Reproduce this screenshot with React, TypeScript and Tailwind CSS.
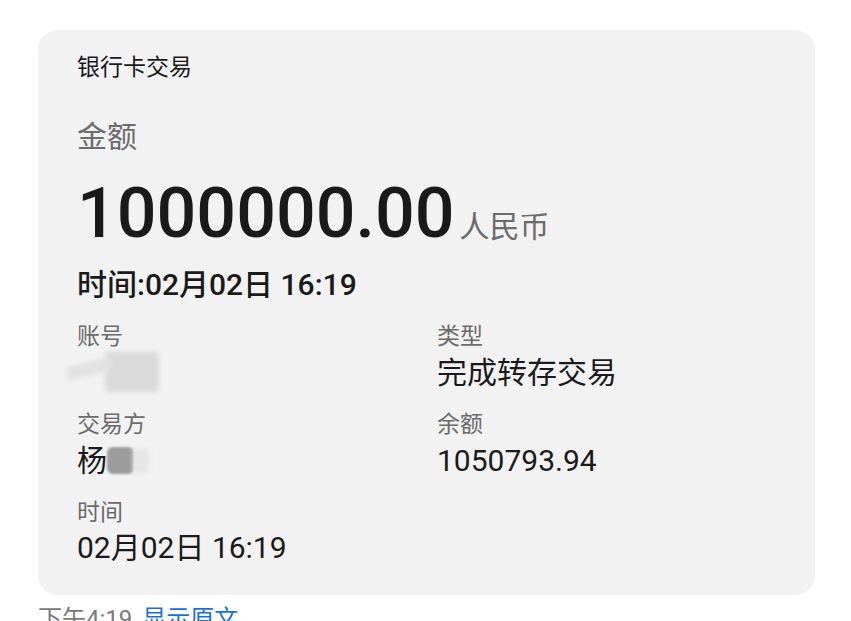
export default function App() {
  const font = { fontFamily: 'Roboto, "Noto Sans CJK SC", "Noto Sans", sans-serif' };
  return (
    <div className="w-[851px] h-[621px] bg-white overflow-hidden" style={font}>
      <div className="ml-[38px] mt-[30px] w-[777px] h-[565px] rounded-[20px] bg-[#f2f2f2] pl-[39px] pt-[23px]">
        <div className="text-[23px] leading-[30px] text-[#1a1a1a]">银行卡交易</div>
        <div className="mt-[36px] text-[30px] leading-[36px] text-[#6b6b6b]">金额</div>
        <div className="mt-[18px] flex items-baseline">
          <span className="text-[70px] leading-[80px] font-medium text-[#1a1a1a]">1000000.00</span>
          <span className="ml-[5px] text-[30px] text-[#6b6b6b]">人民币</span>
        </div>
        <div className="mt-[14px] text-[30px] leading-[36px] font-medium text-[#1a1a1a]">时间:02月02日 16:19</div>
        <div className="mt-[19px] grid grid-cols-[360px_1fr] gap-y-[19px]">
          <div>
            <div className="text-[23px] leading-[30px] text-[#6b6b6b]">账号</div>
            <div className="mt-[3px] h-[36px] relative">
              <div className="absolute left-[28px] top-[-3px] w-[54px] h-[40px] bg-[#dadada] blur-[2px]" />
              <div className="absolute left-[-10px] top-[7px] w-[44px] h-[14px] bg-[#e2e2e2] blur-[2px] -skew-y-[12deg]" />
            </div>
          </div>
          <div>
            <div className="text-[23px] leading-[30px] text-[#6b6b6b]">类型</div>
            <div className="mt-[3px] text-[30px] leading-[36px] text-[#1a1a1a]">完成转存交易</div>
          </div>
          <div>
            <div className="text-[23px] leading-[30px] text-[#6b6b6b]">交易方</div>
            <div className="mt-[3px] flex items-center text-[30px] leading-[36px] text-[#1a1a1a]">
              <span>杨</span>
              <span className="relative ml-[0px] w-[44px] h-[36px]">
                <span className="absolute left-[0px] top-[4px] w-[27px] h-[27px] rounded-[6px] bg-[#9c9c9c] blur-[1px]" />
                <span className="absolute left-[26px] top-[6px] w-[16px] h-[24px] bg-[#e6e6e6] blur-[2px]" />
              </span>
            </div>
          </div>
          <div>
            <div className="text-[23px] leading-[30px] text-[#6b6b6b]">余额</div>
            <div className="mt-[3px] text-[30px] leading-[36px] text-[#1a1a1a]">1050793.94</div>
          </div>
          <div>
            <div className="text-[23px] leading-[30px] text-[#6b6b6b]">时间</div>
            <div className="mt-[2px] text-[30px] leading-[36px] text-[#1a1a1a]">02月02日 16:19</div>
          </div>
        </div>
      </div>
      <div className="ml-[38px] mt-[9px] text-[24px] leading-[30px]">
        <span className="text-[#7a7a7a]">下午4:19</span>
        <span className="ml-[10px] text-[#1a6fe0]">显示原文</span>
      </div>
    </div>
  );
}
